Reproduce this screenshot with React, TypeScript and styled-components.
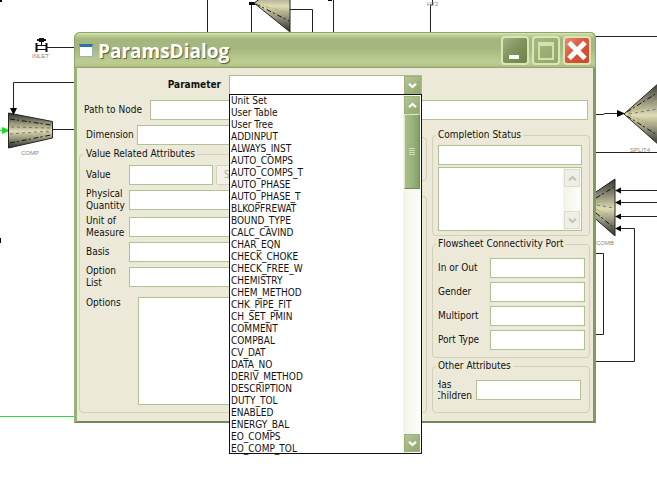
import React, { useState } from "react";
import styled, { createGlobalStyle, css } from "styled-components";

const uiFont = '"DejaVu Sans Condensed", "DejaVu Sans", sans-serif';

const PARAMETERS = [
  "Unit Set", "User Table", "User Tree", "ADDINPUT", "ALWAYS_INST", "AUTO_COMPS",
  "AUTO_COMPS_T", "AUTO_PHASE", "AUTO_PHASE_T", "BLKOPFREWAT", "BOUND_TYPE",
  "CALC_CAVIND", "CHAR_EQN", "CHECK_CHOKE", "CHECK_FREE_W", "CHEMISTRY",
  "CHEM_METHOD", "CHK_PIPE_FIT", "CH_SET_PMIN", "COMMENT", "COMPBAL", "CV_DAT",
  "DATA_NO", "DERIV_METHOD", "DESCRIPTION", "DUTY_TOL", "ENABLED", "ENERGY_BAL",
  "EO_COMPS", "EO_COMP_TOL",
];

const GlobalStyle = createGlobalStyle`
  *, *::before, *::after { box-sizing: border-box; }
  body { margin: 0; background: #fff; }
  button, input, select, textarea { font: inherit; margin: 0; }
`;

const Desktop = styled.div`
  position: relative;
  min-height: 100vh;
  padding: 32px 61px 24px 74px;
  overflow: hidden;
  background: #fff;
  color: #111;
  font: 10px/12px ${uiFont};
`;

const Flowsheet = styled.svg`
  position: absolute;
  top: 0;
  left: 0;
  font: 6px "Liberation Sans", sans-serif;
`;

const Dialog = styled.main`
  position: relative;
  border: 3px solid #9bb177;
  border-top: 0;
  border-right-color: #7f9a62;
  border-bottom: 2px solid #74895a;
  border-radius: 6px 6px 0 0;
  background: #ece9d8;
`;

const TitleBar = styled.header`
  display: flex;
  align-items: center;
  gap: 5px;
  height: 36px;
  margin: 0 -3px;
  padding: 1px 4px 0;
  border: 1px solid #8fa56c;
  border-bottom-color: #93a572;
  border-radius: 6px 6px 0 0;
  background: linear-gradient(#dbe8b4 0, #c2d29a 2px, #a5b67f 6px, #a5b67f 15px, #b9ca8f 26px, #bccc90 31px, #a3b57b 35px);
`;

const WindowIcon = styled.span`
  width: 14px;
  height: 13px;
  border: 1px solid #9db0bd;
  border-top: 3px solid #2d70ae;
  background: #fff;
`;

const Title = styled.h1`
  flex: 1;
  margin: 0;
  color: #fff;
  font: bold 19px/28px "Open Sans", "Noto Sans", sans-serif;
  text-shadow: 1px 1px 1px #4e5e30;
`;

const Caption = styled.button<{ $kind: "min" | "max" | "close" }>`
  display: grid;
  width: 28px;
  height: 29px;
  margin-left: -2px;
  padding: 0;
  place-items: center;
  border: 2px solid #dbe6b8;
  border-radius: 4px;
  background: ${({ $kind }) =>
    $kind === "close"
      ? "linear-gradient(135deg, #e98d70, #d9583a 45%, #c9482a)"
      : $kind === "max"
        ? "linear-gradient(135deg, #a9bb84, #9aaf74 50%, #93a86c)"
        : "linear-gradient(135deg, #a3b183, #7e9259 50%, #6f844b)"};
`;

const Body = styled.div`
  display: flex;
  flex-direction: column;
  gap: 5px;
  padding: 7px 3px 8px 2px;
`;

const ParameterRow = styled.div`
  display: grid;
  grid-template-columns: 142px 193px;
  gap: 8px;
  align-items: center;
  height: 20px;
`;

const ParameterLabel = styled.label`
  font-weight: bold;
  line-height: 16px;
  text-align: right;
`;

const Combo = styled.div`
  position: relative;
`;

const ComboSelect = styled.select`
  display: block;
  width: 100%;
  height: 20px;
  padding: 0 22px 0 3px;
  border: 1px solid #a9bb8c;
  border-radius: 0;
  outline: 0;
  appearance: none;
  background: #fff;
`;

const ArrowFace = css`
  display: grid;
  place-items: center;
  padding: 0;
  border: 1px solid #e3ebcb;
  outline: 1px solid #9fb07e;
  outline-offset: -1px;
  background: linear-gradient(135deg, #b4c691, #8fa870);
`;

const ComboArrow = styled.span`
  ${ArrowFace}
  position: absolute;
  top: 1px;
  right: 1px;
  width: 17px;
  height: 18px;
  pointer-events: none;
`;

const Popup = styled.div`
  position: absolute;
  z-index: 2;
  top: 19px;
  left: 0;
  right: 0;
  display: flex;
  height: 360px;
  border: 1px solid #111;
  background: #fff;
`;

const Options = styled.ul`
  flex: 1;
  margin: 0;
  padding: 0 0 0 1px;
  list-style: none;
`;

const Option = styled.li`
  height: 12px;
  white-space: nowrap;
  cursor: default;
`;

const ScrollBar = styled.div`
  display: flex;
  flex-direction: column;
  width: 18px;
  padding: 1px;
  background: linear-gradient(90deg, #f4f4ec, #fdfdfa);
`;

const ScrollButton = styled.button<{ $muted?: boolean }>`
  ${ArrowFace}
  flex: none;
  width: 16px;
  height: 18px;
  ${({ $muted }) =>
    $muted &&
    css`
      border-color: #fff;
      outline-color: #dddbce;
      background: #f0efe6;
    `}
`;

const Thumb = styled.div`
  display: grid;
  height: 75px;
  place-items: center;
  border: 1px solid #dfe8c8;
  border-right-color: #738c56;
  border-bottom-color: #738c56;
  background: linear-gradient(90deg, #a9be8a, #9ab47d 50%, #82a067);
`;

const Track = styled.div`
  flex: 1;
`;

const LineRow = styled.div<{ $gap: number; $indent: number }>`
  display: flex;
  gap: ${({ $gap }) => $gap}px;
  align-items: center;
  padding: 0 2px 0 ${({ $indent }) => $indent}px;
`;

const TextBox = styled.input`
  flex: 1;
  min-width: 0;
  height: 20px;
  padding: 0 3px;
  border: 1px solid #b0c397;
  outline: 0;
  background: #fff;
`;

const Columns = styled.div`
  display: grid;
  grid-template-columns: minmax(0, 1fr) 122px 158px;
  gap: 5px;
`;

const Column = styled.div<{ $top?: number; $gap: number }>`
  display: flex;
  flex-direction: column;
  gap: ${({ $gap }) => $gap}px;
  padding-top: ${({ $top = 0 }) => $top}px;
`;

const Group = styled.fieldset<{ $pad: string; $gap?: number; $grow?: boolean; $height?: number }>`
  display: flex;
  flex-direction: column;
  flex: ${({ $grow }) => ($grow ? 1 : "none")};
  gap: ${({ $gap = 3 }) => $gap}px;
  min-width: 0;
  height: ${({ $height }) => ($height ? `${$height}px` : "auto")};
  margin: 0;
  padding: ${({ $pad }) => $pad};
  border: 1px solid #d2d1b9;
  border-radius: 4px;
`;

const Legend = styled.legend`
  margin-left: -2px;
  padding: 0 2px;
  line-height: 12px;
`;

const Field = styled.div<{ $label: number; $top?: boolean }>`
  display: grid;
  grid-template-columns: ${({ $label }) => $label}px minmax(0, 1fr);
  align-items: ${({ $top }) => ($top ? "start" : "center")};
  margin-top: ${({ $top }) => ($top ? 5 : 0)}px;
`;

const ValueControls = styled.div`
  display: grid;
  grid-template-columns: 84px minmax(0, 1fr);
  gap: 3px;
`;

const DisabledButton = styled.button`
  height: 20px;
  padding: 0 7px;
  border: 1px solid #d6d0c0;
  border-radius: 2px;
  background: #f3f1e8;
  color: #b3ae9c;
  text-align: left;
`;

const TextArea = styled.textarea<{ $height: number; $bare?: boolean }>`
  display: block;
  flex: 1;
  width: 100%;
  min-width: 0;
  height: ${({ $height }) => $height}px;
  padding: 2px;
  border: ${({ $bare }) => ($bare ? "0" : "1px solid #b0c397")};
  outline: 0;
  resize: none;
  background: #fff;
`;

const Memo = styled.div`
  display: flex;
  border: 1px solid #b0c397;
  background: #fff;
`;

const ClippedLabel = styled.label`
  display: flex;
  justify-content: flex-end;
  width: 34px;
  overflow: hidden;
  line-height: 11px;
`;

const ClippedText = styled.span`
  flex: none;
`;

function Chevron({ up = false, color = "#fff" }: { up?: boolean; color?: string }) {
  return (
    <svg width="9" height="7" viewBox="0 0 9 7" aria-hidden="true">
      <path d={up ? "M1 5.2 4.5 2 8 5.2" : "M1 1.8 4.5 5 8 1.8"} fill="none" stroke={color} strokeWidth="2.2" />
    </svg>
  );
}

function ProcessDiagram() {
  return (
    <Flowsheet width="657" height="478" viewBox="0 0 657 478" aria-hidden="true">
      <defs>
        <linearGradient id="steel" x1="0" y1="0" x2="0" y2="1">
          <stop offset="0" stopColor="#34342c" />
          <stop offset=".28" stopColor="#8c8a78" />
          <stop offset=".52" stopColor="#dedcb4" />
          <stop offset=".72" stopColor="#98967f" />
          <stop offset="1" stopColor="#2c2c27" />
        </linearGradient>
      </defs>
      <g fill="none" stroke="#222" strokeWidth="1">
        <path d="M207.500 0V33M251.500 4V33M290 9.500H312.500V33M333.500 0V33M430.500 5V33M432.500 0V5H430" />
        <path d="M46 47.500H75M75 82.500H13.500V110M52 129.500H75" />
        <path d="M595 36.500H657M595 114.500H603L605 113.500H618M595 152.500H657" />
        <path d="M620 190.500H657M620 202.500H657M620 216.500H657M620 228.500H634.500V361.500H595M595 253.500H603.500V334.500H595" />
      </g>
      <path d="M0 416.500H75M0 130.500H5" stroke="#2fdc3f" />
      <path d="M2 127 10 130.500 2 134Z" fill="#10e020" />
      <path d="M0 0H2V2H0ZM0 238H1V243H0ZM328 0H332V1H328ZM249 2H256V5H249Z" fill="#000" />

      <g fill="url(#steel)" stroke="#26261f" strokeWidth="1">
        <path d="M8.500 113 52.500 121.500V138L8.500 148Z" />
        <path d="M254 3 290-22V32Z" />
        <path d="M624 114 660 82V146Z" />
        <path d="M590 196 615 179V236L590 214Z" />
      </g>
      <g fill="none" strokeWidth="1">
        <path d="M10 119 51 125M10 143 51 135M256 4 289 21M627 112 657 93M627 116 657 135M596 198 614 187M596 213 614 228" stroke="#17171b" strokeDasharray="5 2 2 3" />
        <path d="M10 123 51 127M10 138 51 132M257 4 289 13M628 113 657 101M628 115 657 126M596 203 614 198M596 209 614 218" stroke="#b5b24c" strokeDasharray="4 2 1 2" />
        <path d="M11 127 50 128M10 134 51 131M629 114 657 109M597 205 614 208" stroke="#777582" strokeDasharray="3 3" />
      </g>
      <path d="M10 108H17L13.500 115ZM617 110 625 113.500 617 117ZM615 190.500 621 187.500V193.500ZM615 202.500 621 199.500V205.500ZM615 216.500 621 213.500V219.500ZM615 228.500 621 225.500V231.500Z" fill="#000" />
      <path d="M36.500 43V52M46.500 43V52" fill="none" stroke="#111" strokeWidth="2" />
      <path d="M36 45.500H46M36 49.500H46M41.500 40V45" fill="none" stroke="#111" />
      <path d="M37 39H46V41H37ZM39 38H44V42H39Z" fill="#111" />
      <g fill="#858585">
        <text x="32" y="58">INLET</text>
        <text x="21" y="155">COMP</text>
        <text x="427" y="6">HT2</text>
        <text x="630" y="152">SPLIT4</text>
        <text x="596" y="245">COMB</text>
      </g>
    </Flowsheet>
  );
}

function LabeledBox({ id, label, labelWidth }: { id: string; label: React.ReactNode; labelWidth: number }) {
  return (
    <Field $label={labelWidth}>
      <label htmlFor={id}>{label}</label>
      <TextBox id={id} />
    </Field>
  );
}

export default function App() {
  const [parameter, setParameter] = useState("");
  return (
    <>
      <GlobalStyle />
      <Desktop>
        <ProcessDiagram />
        <Dialog aria-label="ParamsDialog">
          <TitleBar>
            <WindowIcon />
            <Title>ParamsDialog</Title>
            <Caption $kind="min" aria-label="Minimize">
              <svg width="22" height="23" viewBox="0 0 22 23"><path d="M5 16H15V20H5Z" fill="#fff" /></svg>
            </Caption>
            <Caption $kind="max" aria-label="Maximize">
              <svg width="22" height="23" viewBox="0 0 22 23">
                <path d="M4 4H18V20H4ZM5 6H17" fill="none" stroke="#d3e2aa" strokeWidth="2" />
              </svg>
            </Caption>
            <Caption $kind="close" aria-label="Close">
              <svg width="22" height="23" viewBox="0 0 22 23">
                <path d="M3 3.500 19 19.500M19 3.500 3 19.500" stroke="#fff" strokeWidth="5" />
              </svg>
            </Caption>
          </TitleBar>
          <Body>
            <ParameterRow>
              <ParameterLabel htmlFor="parameter">Parameter</ParameterLabel>
              <Combo>
                <ComboSelect id="parameter" value={parameter} onChange={(e) => setParameter(e.target.value)}>
                  <option value="" />
                  {PARAMETERS.map((name) => <option key={name}>{name}</option>)}
                </ComboSelect>
                <ComboArrow><Chevron /></ComboArrow>
                <Popup>
                  <Options role="listbox" aria-label="Parameter">
                    {PARAMETERS.map((name) => (
                      <Option key={name} role="option" aria-selected={name === parameter} onClick={() => setParameter(name)}>
                        {name}
                      </Option>
                    ))}
                  </Options>
                  <ScrollBar>
                    <ScrollButton aria-label="Scroll up"><Chevron up /></ScrollButton>
                    <Thumb>
                      <svg width="6" height="8" viewBox="0 0 6 8" aria-hidden="true">
                        <path d="M0 .5H6M0 2.500H6M0 4.500H6M0 6.500H6" stroke="#cfdfb5" />
                      </svg>
                    </Thumb>
                    <Track />
                    <ScrollButton aria-label="Scroll down"><Chevron /></ScrollButton>
                  </ScrollBar>
                </Popup>
              </Combo>
            </ParameterRow>

            <LineRow $gap={8} $indent={5}>
              <label htmlFor="path">Path to Node</label>
              <TextBox id="path" />
            </LineRow>

            <Columns>
              <Column $gap={3}>
                <LineRow $gap={3} $indent={7}>
                  <label htmlFor="dimension">Dimension</label>
                  <TextBox id="dimension" />
                </LineRow>
                <Group $pad="5px 4px 6px 6px" $grow>
                  <Legend>Value Related Attributes</Legend>
                  <Field $label={43}>
                    <label htmlFor="value">Value</label>
                    <ValueControls>
                      <TextBox id="value" />
                      <DisabledButton disabled>S</DisabledButton>
                    </ValueControls>
                  </Field>
                  <LabeledBox id="quantity" labelWidth={43} label={<>Physical<br />Quantity</>} />
                  <LabeledBox id="unit" labelWidth={43} label={<>Unit of<br />Measure</>} />
                  <LabeledBox id="basis" labelWidth={43} label="Basis" />
                  <LabeledBox id="option-list" labelWidth={43} label={<>Option<br />List</>} />
                  <Field $label={52} $top>
                    <label htmlFor="options">Options</label>
                    <TextArea id="options" $height={108} />
                  </Field>
                </Group>
              </Column>

              <Column $top={12} $gap={15}>
                <Group $pad="0" $height={44} />
                <Group $pad="0" $grow />
              </Column>

              <Column $top={4} $gap={2}>
                <Group $pad="4px 7px 4px 5px" $gap={2}>
                  <Legend>Completion Status</Legend>
                  <TextBoxRow>
                    <TextBox aria-label="Completion status" />
                  </TextBoxRow>
                  <Memo>
                    <TextArea aria-label="Completion messages" $height={62} $bare />
                    <ScrollBar>
                      <ScrollButton $muted disabled aria-label="Scroll up"><Chevron up color="#c5c4ba" /></ScrollButton>
                      <Track />
                      <ScrollButton $muted disabled aria-label="Scroll down"><Chevron color="#c5c4ba" /></ScrollButton>
                    </ScrollBar>
                  </Memo>
                </Group>
                <Group $pad="8px 4px 7px 5px" $gap={4}>
                  <Legend>Flowsheet Connectivity Port</Legend>
                  <LabeledBox id="in-out" labelWidth={52} label="In or Out" />
                  <LabeledBox id="gender" labelWidth={52} label="Gender" />
                  <LabeledBox id="multiport" labelWidth={52} label="Multiport" />
                  <LabeledBox id="port-type" labelWidth={52} label="Port Type" />
                </Group>
                <Group $pad="7px 8px 11px 5px">
                  <Legend>Other Attributes</Legend>
                  <Field $label={38}>
                    <ClippedLabel htmlFor="children"><ClippedText>Has<br />Children</ClippedText></ClippedLabel>
                    <TextBox id="children" />
                  </Field>
                </Group>
              </Column>
            </Columns>
          </Body>
        </Dialog>
      </Desktop>
    </>
  );
}

const TextBoxRow = styled.div`
  display: flex;
`;
